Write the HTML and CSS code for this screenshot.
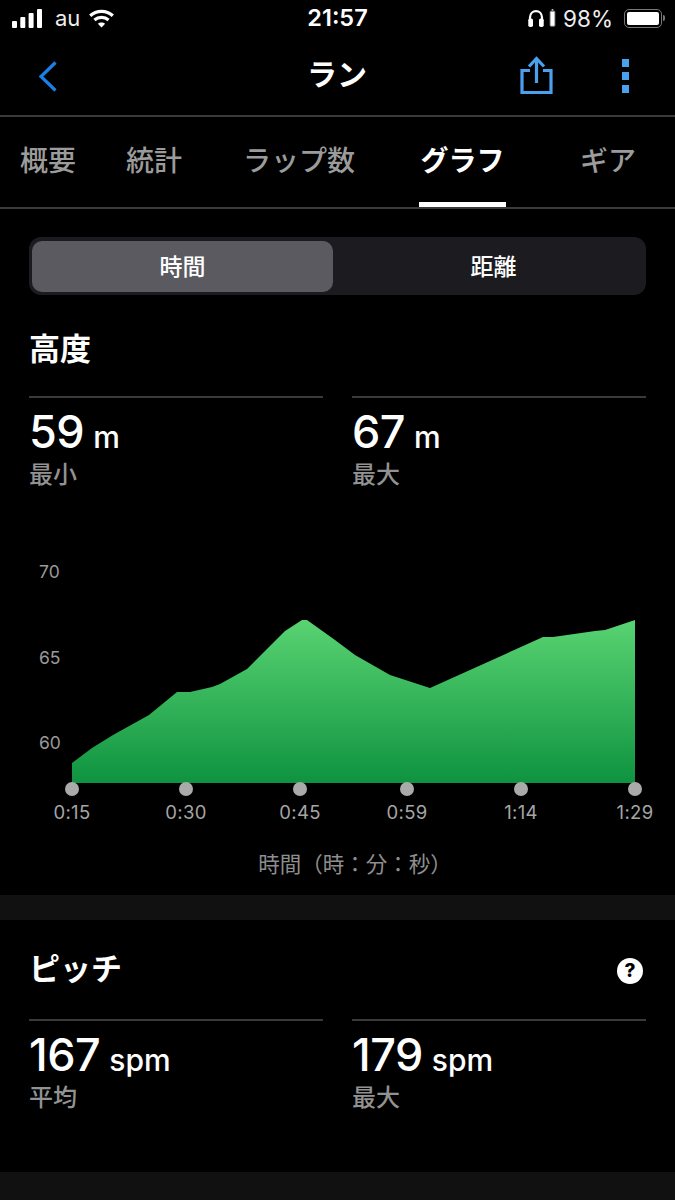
FILE: index.html
```html
<!DOCTYPE html>
<html lang="ja">
<head>
  <meta charset="UTF-8">
  <meta name="viewport" content="width=device-width, initial-scale=1.0">
  <title>ラン</title>
  <link rel="stylesheet" href="styles.css">
</head>
<body>
  <!-- status bar -->
  <div class="status">
    <div class="status-left">
      <svg class="signal" width="30" height="19" viewBox="0 0 30 19" fill="#fff">
        <rect x="0" y="12" width="5" height="7" rx="1"/>
        <rect x="8.3" y="8" width="5" height="11" rx="1"/>
        <rect x="16.6" y="4" width="5" height="15" rx="1"/>
        <rect x="25" y="0" width="5" height="19" rx="1"/>
      </svg>
      <span class="carrier">au</span>
      <svg width="27" height="19" viewBox="0 0 28 21" fill="none" stroke="#fff" stroke-width="3.6">
        <path d="M1.5 7.5C8.5 1 19.5 1 26.5 7.5"/>
        <path d="M6.2 12.2C10.6 8.4 17.4 8.4 21.8 12.2"/>
        <path d="M14 20.5L10 16.2C12 14.4 16 14.4 18 16.2Z" fill="#fff" stroke="none"/>
      </svg>
    </div>
    <div class="clock">21:57</div>
    <div class="status-right">
      <svg width="18" height="18" viewBox="0 0 18 21" fill="none" stroke="#fff" stroke-width="2.6">
        <path d="M2 16V10C2 0 16 0 16 10V16"/>
        <rect x="0" y="11" width="5.5" height="10" rx="2" fill="#fff" stroke="none"/>
        <rect x="12.5" y="11" width="5.5" height="10" rx="2" fill="#fff" stroke="none"/>
      </svg>
      <svg class="bud" width="7" height="18" viewBox="0 0 7 21">
        <rect x="2.5" y="0" width="2" height="2" fill="#bbb"/>
        <rect x="0.7" y="2.5" width="5.6" height="17.5" rx="1" fill="#fff" stroke="#888" stroke-width="1"/>
      </svg>
      <span class="percent">98%</span>
      <div class="battery"><div class="battery-fill"></div></div>
      <div class="battery-tip"></div>
    </div>
  </div>

  <!-- nav bar -->
  <div class="nav">
    <svg class="back" width="19" height="31" viewBox="0 0 19 31" fill="none" stroke="#1a7fe6" stroke-width="3.2">
      <path d="M17.5 1.5L3 15.5L17.5 29.5"/>
    </svg>
    <div class="nav-title">ラン</div>
    <svg class="share" width="33" height="38" viewBox="0 0 33 38" fill="none" stroke="#4a9fee" stroke-width="3.2">
      <path d="M16.5 3V27"/>
      <path d="M9 10.5L16.5 2.5L24 10.5"/>
      <path d="M10 14.5H2V36.5H31V14.5H23"/>
    </svg>
    <div class="more"><i></i><i></i><i></i></div>
  </div>

  <!-- tabs -->
  <div class="tabs">
    <div class="tab">概要</div>
    <div class="tab">統計</div>
    <div class="tab">ラップ数</div>
    <div class="tab active">グラフ</div>
    <div class="tab">ギア</div>
  </div>

  <div class="segment">
    <div class="seg selected">時間</div>
    <div class="seg">距離</div>
  </div>

  <h2 class="title first">高度</h2>
  <div class="stats">
    <div class="stat">
      <div class="value">59<span class="unit">m</span></div>
      <div class="label">最小</div>
    </div>
    <div class="stat">
      <div class="value">67<span class="unit">m</span></div>
      <div class="label">最大</div>
    </div>
  </div>

  <svg class="chart" width="675" height="340" viewBox="0 555 675 340">
    <defs>
      <linearGradient id="green" x1="0" y1="0" x2="0" y2="1">
        <stop offset="0" stop-color="#59d372"/>
        <stop offset="1" stop-color="#0f9340"/>
      </linearGradient>
    </defs>
    <g class="y-label">
      <text x="39" y="578">70</text>
      <text x="39" y="664">65</text>
      <text x="39" y="749">60</text>
    </g>
    <polygon fill="url(#green)" points="72,783 72,763 92,748 113,735 149,715 177,692 190,692 212,687 220,684 247,669 285,631 302,620 307,620 335,640 355,655 390,675 430,688 543,637 553,637 595,631 605,630 635,620 635,783"/>
    <g fill="#aaa">
      <circle cx="72" cy="789" r="7"/>
      <circle cx="186" cy="789" r="7"/>
      <circle cx="300" cy="789" r="7"/>
      <circle cx="407" cy="789" r="7"/>
      <circle cx="521" cy="789" r="7"/>
      <circle cx="635" cy="789" r="7"/>
    </g>
    <g class="x-label">
      <text x="72" y="819">0:15</text>
      <text x="186" y="819">0:30</text>
      <text x="300" y="819">0:45</text>
      <text x="407" y="819">0:59</text>
      <text x="521" y="819">1:14</text>
      <text x="635" y="819">1:29</text>
    </g>
    <text class="caption" x="355" y="872">時間（時：分：秒）</text>
  </svg>

  <div class="band"></div>

  <div class="title-row">
    <h2 class="title">ピッチ</h2>
    <div class="help">?</div>
  </div>
  <div class="stats">
    <div class="stat">
      <div class="value">167<span class="unit">spm</span></div>
      <div class="label">平均</div>
    </div>
    <div class="stat">
      <div class="value">179<span class="unit">spm</span></div>
      <div class="label">最大</div>
    </div>
  </div>

  <div class="band last"></div>
</body>
</html>
```

FILE: styles.css
```css
html, body { margin: 0; padding: 0; background: #000; }
body { width: 675px; height: 1200px; overflow: hidden; color: #fff; font-family: Inter, "Noto Sans CJK JP", sans-serif; }

.status { height: 38px; display: flex; align-items: center; justify-content: space-between; padding: 0 10px 2px 12px; box-sizing: border-box; position: relative; }
.status-left, .status-right { display: flex; align-items: center; }
.carrier { font-size: 22px; margin: 0 8px 0 13px; color: #eee; }
.clock { position: absolute; left: 0; right: 0; top: 4px; text-align: center; font-size: 23.5px; font-weight: 600; line-height: 28px; }
.bud { margin-left: 4px; }
.percent { font-size: 22.5px; margin: 0 11px 0 7px; color: #eee; }
.battery { border: 1.5px solid #777; border-radius: 5px; padding: 2px; width: 32px; height: 13px; }
.battery-fill { width: 100%; height: 100%; background: #fff; border-radius: 2px; }
.battery-tip { width: 2px; height: 6px; background: #777; margin-left: 1px; border-radius: 0 2px 2px 0; }

.nav { height: 77px; border-bottom: 2px solid #3a3a3a; display: flex; align-items: center; position: relative; padding-left: 38px; }
.nav-title { position: absolute; left: -1px; right: 0; top: 15px; text-align: center; font-size: 30px; font-weight: 700; line-height: 42px; }
.back { margin-top: -1px; }
.share { margin-left: auto; margin-right: 69px; margin-top: -4px; }
.more { display: flex; flex-direction: column; gap: 5px; margin-right: 46px; margin-top: -1px; }
.more i { display: block; width: 7px; height: 8px; background: #4a9fee; }

.tabs { height: 90px; border-bottom: 2px solid #3a3a3a; display: flex; padding-left: 20px; }
.tab { font-size: 28px; line-height: 88px; font-weight: 500; color: #9b9b9b; height: 90px; box-sizing: border-box; white-space: nowrap; }
.tab:nth-child(2) { margin-left: 50px; }
.tab:nth-child(3) { margin-left: 61px; }
.tab:nth-child(4) { margin-left: 64px; }
.tab:nth-child(5) { margin-left: 74px; }
.tab.active { color: #fff; font-weight: 700; border-bottom: 5px solid #fff; padding: 0 1.5px; }

.segment { margin: 28px 29px 0; height: 58px; background: #1c1c20; border-radius: 12px; display: flex; padding: 4px 0 3px 3px; box-sizing: border-box; }
.seg { flex: 1; display: flex; align-items: center; justify-content: center; font-size: 23px; font-weight: 500; color: #fff; margin-left: 8px; padding-bottom: 4px; }
.seg.selected { flex: none; width: 301px; margin-left: 0; background: #5a5a60; border-radius: 10px; box-sizing: border-box; }

.title { margin: 0; font-size: 31px; font-weight: 700; line-height: 40px; }
.title.first { margin: 34px 29px 27px; }

.stats { display: flex; gap: 29px; padding: 0 29px; }
.stat { flex: 1; border-top: 2px solid #3a3a3a; }
.value { font-family: Inter, sans-serif; font-size: 45px; font-weight: 500; line-height: 54px; margin-top: 7px; letter-spacing: -0.5px; }
.unit { font-size: 30px; font-weight: 500; margin-left: 9px; letter-spacing: 0; }
.label { font-size: 24px; font-weight: 500; color: #929292; line-height: 32px; margin-top: -5px; }

.chart { display: block; margin-top: 64px; height: 340px; }
.y-label text { font-size: 17.5px; fill: #9a9a9a; }
.x-label text { font-size: 18.5px; fill: #a5a5a5; text-anchor: middle; letter-spacing: 0.3px; }
.caption { font-size: 21.5px; fill: #8e8e8e; text-anchor: middle; }

.band { height: 25px; background: #111; }
.band.last { height: 28px; margin-top: 58px; }

.title-row { display: flex; align-items: center; justify-content: space-between; padding: 0 32px 0 29px; margin: 29px 0 30px; }
.help { width: 26px; height: 26px; border-radius: 50%; background: #fff; color: #000; font-size: 19px; font-weight: 800; line-height: 26px; text-align: center; margin-top: 4px; }
```
